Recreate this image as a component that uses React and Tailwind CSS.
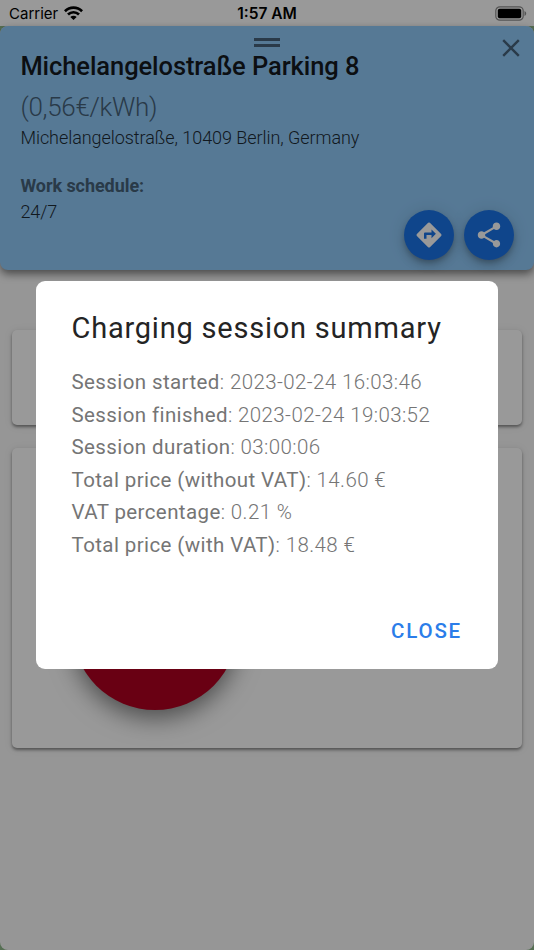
import React, { useState } from "react";

const station = {
  name: "Michelangelostraße Parking 8",
  price: "(0,56€/kWh)",
  address: "Michelangelostraße, 10409 Berlin, Germany",
  schedule: "24/7",
};

const summary = [
  { label: "Session started", value: "2023-02-24 16:03:46" },
  { label: "Session finished", value: "2023-02-24 19:03:52" },
  { label: "Session duration", value: "03:00:06" },
  { label: "Total price (without VAT)", value: "14.60 €" },
  { label: "VAT percentage", value: "0.21 %" },
  { label: "Total price (with VAT)", value: "18.48 €" },
];

function StatusBar() {
  return (
    <div className="grid grid-cols-3 items-center h-[26px] pl-[9px] pr-[7px] bg-white text-black font-['Inter',sans-serif] text-[15px] leading-[26px]">
      <div className="flex items-center gap-[6px] pt-[1px]">
        <span>Carrier</span>
        <svg className="-mt-[2px]" width="19" height="14" viewBox="0 0 19 14" fill="none" stroke="#000" strokeWidth="2.7">
          <path d="M0.9 5.2C5.8 0.4 13.2 0.4 18.1 5.2" />
          <path d="M4 8.5C7.1 5.5 11.9 5.5 15 8.5" />
          <path d="M9.5 14L6.3 11C8.1 9.400 10.900 9.400 12.700 11Z" fill="#000" stroke="none" />
        </svg>
      </div>
      <span className="pt-[1px] pr-[2px] text-center text-[15.5px] font-semibold whitespace-nowrap">1:57 AM</span>
      <svg className="justify-self-end" width="32" height="15" viewBox="0 0 32 15">
        <rect x="0.8" y="0.8" width="27.4" height="13.4" rx="4" fill="none" stroke="#000" strokeOpacity="0.45" strokeWidth="1.2" />
        <rect x="2.800" y="2.800" width="23.400" height="9.400" rx="1.800" fill="#000" />
        <path d="M29.5 5v5c1-.4 1.7-1.400 1.7-2.500s-.7-2.100-1.700-2.500z" fill="#000" fillOpacity="0.45" />
      </svg>
    </div>
  );
}

function RoundButton({ label, children }) {
  return (
    <button
      aria-label={label}
      className="flex items-center justify-center w-[50px] h-[50px] rounded-full bg-[#1a73e8] shadow-[0_3px_5px_-1px_rgba(0,0,0,0.2),0_6px_10px_rgba(0,0,0,0.14),0_1px_18px_rgba(0,0,0,0.12)]"
    >
      <svg width="30" height="30" viewBox="0 0 24 24" fill="#fff">
        {children}
      </svg>
    </button>
  );
}

function StationHeader() {
  return (
    <header className="relative h-[244px] pl-[20.4px] rounded-lg bg-[#90caf9] shadow-[0_4px_8px_rgba(0,0,0,0.5)]">
      <div className="flex flex-col items-center gap-[3px] pt-[12px] -ml-[20.4px]">
        <div className="w-[26px] h-[3px] bg-[#46627a]" />
        <div className="w-[26px] h-[3px] bg-[#46627a]" />
      </div>
      <h1 className="mt-[2px] text-[25.5px] leading-[34px] tracking-[-0.08px] font-medium text-[#14191f]">{station.name}</h1>
      <p className="mt-[6px] text-[26px] leading-[36px] tracking-[-0.3px] font-light text-[#456178]">{station.price}</p>
      <p className="text-[18px] leading-[26px] tracking-[-0.06px] font-light text-[#1d2a34]">{station.address}</p>
      <p className="mt-[22px] text-[18px] leading-[26px] tracking-[-0.06px] font-bold text-[#456178]">Work schedule:</p>
      <p className="text-[18px] leading-[26px] tracking-[-0.06px] font-light text-[#1d2a34]">{station.schedule}</p>

      <button aria-label="Close station" className="absolute right-[14px] top-[13px]">
        <svg width="18" height="18" viewBox="0 0 18 18" stroke="#46627a" strokeWidth="2.4">
          <path d="M1.200 1.200L16.800 16.800M16.800 1.200L1.200 16.800" />
        </svg>
      </button>

      <div className="absolute right-[20px] bottom-[10px] flex gap-[10px]">
        <RoundButton label="Directions">
          <path d="M21.710 11.290l-9-9a.996.996 0 0 0-1.410 0l-9 9a.996.996 0 0 0 0 1.410l9 9c.39.39 1.020.39 1.410 0l9-9a.996.996 0 0 0 0-1.410zM14 14.500V12h-4v3H8v-4c0-.55.45-1 1-1h5V7.500l3.500 3.500-3.500 3.500z" />
        </RoundButton>
        <RoundButton label="Share">
          <path d="M18 16.080c-.76 0-1.440.3-1.960.77L8.910 12.700c.05-.23.09-.46.09-.7s-.04-.47-.09-.7l7.050-4.110c.54.5 1.250.81 2.040.81 1.660 0 3-1.340 3-3s-1.340-3-3-3-3 1.340-3 3c0 .24.04.47.09.7L8.040 9.810C7.500 9.310 6.790 9 6 9c-1.660 0-3 1.340-3 3s1.340 3 3 3c.79 0 1.500-.31 2.040-.81l7.120 4.160c-.05.21-.08.43-.08.65 0 1.610 1.310 2.920 2.920 2.920s2.920-1.310 2.920-2.920-1.310-2.920-2.920-2.920z" />
        </RoundButton>
      </div>
    </header>
  );
}

function SummaryDialog({ onClose }) {
  return (
    <div className="fixed inset-0 flex items-center justify-center bg-black/40">
      <div role="dialog" className="flex flex-col w-[462px] h-[388px] pl-[35.5px] pr-[36px] rounded-[9px] bg-white">
        <h2 className="mt-[28px] text-[29px] leading-[38px] tracking-[0.78px] text-[#242424]">
          Charging session summary
        </h2>
        <div className="mt-[19px] text-[20.5px] leading-[32.6px] tracking-[0.4px] text-[#757575]">
          {summary.map((row) => (
            <p key={row.label} className="whitespace-nowrap">
              {row.label}
              <span className="font-light">: {row.value}</span>
            </p>
          ))}
        </div>
        <button
          onClick={onClose}
          className="mt-auto mb-[22px] self-end text-[20.5px] leading-[32px] font-medium tracking-[1.8px] text-[#2b7de9]"
        >
          CLOSE
        </button>
      </div>
    </div>
  );
}

export default function App() {
  const [open, setOpen] = useState(true);

  return (
    <div className="h-[950px] overflow-hidden bg-[#8fb98b] font-['Roboto',sans-serif]">
      <StatusBar />
      <div className="h-[924px] rounded-lg bg-[#fafafa]">
        <StationHeader />
        <main className="flex flex-col gap-[23px] px-[12px] pt-[60px]">
          <div className="h-[95px] rounded-[5px] bg-white shadow-[0_2px_3px_rgba(0,0,0,0.4),0_1px_8px_rgba(0,0,0,0.1)]" />
          <div className="flex items-end h-[300px] pl-[59.5px] pb-[38px] rounded-[5px] bg-white shadow-[0_2px_3px_rgba(0,0,0,0.4),0_1px_8px_rgba(0,0,0,0.1)]">
            {/* stop charging */}
            <button
              aria-label="Stop charging"
              className="w-[166px] h-[166px] rounded-full bg-[#b00020] shadow-[0_8px_24px_rgba(0,0,0,0.5)]"
            />
          </div>
        </main>
      </div>
      {open && <SummaryDialog onClose={() => setOpen(false)} />}
    </div>
  );
}
